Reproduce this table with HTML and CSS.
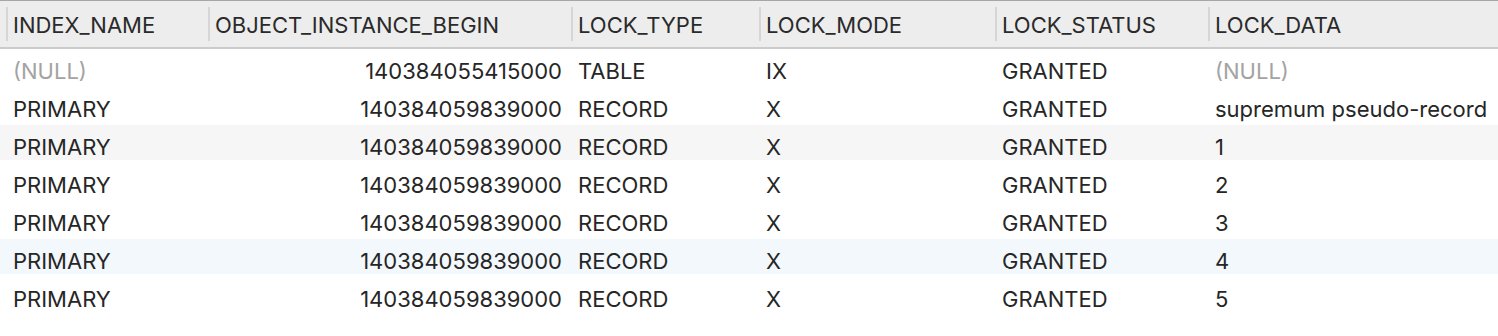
FILE: index.html
```html
<!DOCTYPE html>
<html>
<head>
<meta charset="utf-8">
<link rel="stylesheet" href="styles.css">
</head>
<body>
<div class="grid">
  <div class="head">
    <div class="hc"></div>
    <div class="hc">INDEX_NAME</div>
    <div class="hc">OBJECT_INSTANCE_BEGIN</div>
    <div class="hc">LOCK_TYPE</div>
    <div class="hc">LOCK_MODE</div>
    <div class="hc">LOCK_STATUS</div>
    <div class="hc">LOCK_DATA</div>
  </div>
  <div class="row">
    <div class="c"></div>
    <div class="c null">(NULL)</div>
    <div class="c num">140384055415000</div>
    <div class="c">TABLE</div>
    <div class="c">IX</div>
    <div class="c">GRANTED</div>
    <div class="c null">(NULL)</div>
  </div>
  <div class="row">
    <div class="c"></div>
    <div class="c">PRIMARY</div>
    <div class="c num">140384059839000</div>
    <div class="c">RECORD</div>
    <div class="c">X</div>
    <div class="c">GRANTED</div>
    <div class="c">supremum pseudo-record</div>
  </div>
  <div class="row alt">
    <div class="c"></div>
    <div class="c">PRIMARY</div>
    <div class="c num">140384059839000</div>
    <div class="c">RECORD</div>
    <div class="c">X</div>
    <div class="c">GRANTED</div>
    <div class="c">1</div>
  </div>
  <div class="row">
    <div class="c"></div>
    <div class="c">PRIMARY</div>
    <div class="c num">140384059839000</div>
    <div class="c">RECORD</div>
    <div class="c">X</div>
    <div class="c">GRANTED</div>
    <div class="c">2</div>
  </div>
  <div class="row">
    <div class="c"></div>
    <div class="c">PRIMARY</div>
    <div class="c num">140384059839000</div>
    <div class="c">RECORD</div>
    <div class="c">X</div>
    <div class="c">GRANTED</div>
    <div class="c">3</div>
  </div>
  <div class="row hover">
    <div class="c"></div>
    <div class="c">PRIMARY</div>
    <div class="c num">140384059839000</div>
    <div class="c">RECORD</div>
    <div class="c">X</div>
    <div class="c">GRANTED</div>
    <div class="c">4</div>
  </div>
  <div class="row">
    <div class="c"></div>
    <div class="c">PRIMARY</div>
    <div class="c num">140384059839000</div>
    <div class="c">RECORD</div>
    <div class="c">X</div>
    <div class="c">GRANTED</div>
    <div class="c">5</div>
  </div>
</div>
</body>
</html>
```

FILE: styles.css
```css
html, body {
  margin: 0;
  padding: 0;
  background: #ffffff;
}
body {
  font-family: Inter, "Noto Sans", "Liberation Sans", sans-serif;
  font-size: 22px;
  color: #262626;
  overflow: hidden;
}
.grid {
  width: 1498px;
}
.head, .row {
  display: grid;
  grid-template-columns: 6px 202px 363px 188px 236px 213px 1fr;
}
.head {
  height: 46px;
  background: #ededed;
  border-top: 1px solid #a6a6a6;
  border-bottom: 2px solid #cbcbcb;
  align-items: center;
}
.hc {
  height: 34px;
  box-sizing: border-box;
  padding-top: 2px;
  border-left: 2px solid #d6d6d6;
  padding-left: 5px;
  display: flex;
  align-items: center;
  white-space: nowrap;
  color: #2a2a2a;
}
.hc:first-child {
  border-left: none;
}
.row {
  height: 38px;
  box-sizing: border-box;
  padding-top: 5px;
  align-items: center;
}
.row.alt {
  background: linear-gradient(#f6f6f6 0 35px, transparent 35px);
}
.row.hover {
  background: linear-gradient(#f3f8fd 0 35px, transparent 35px);
}
.c {
  padding-left: 7px;
  white-space: nowrap;
}
.c:first-child {
  padding: 0;
}
.c.num {
  text-align: right;
  padding-left: 0;
  padding-right: 9px;
}
.c.null {
  color: #a3a3a3;
}
```
